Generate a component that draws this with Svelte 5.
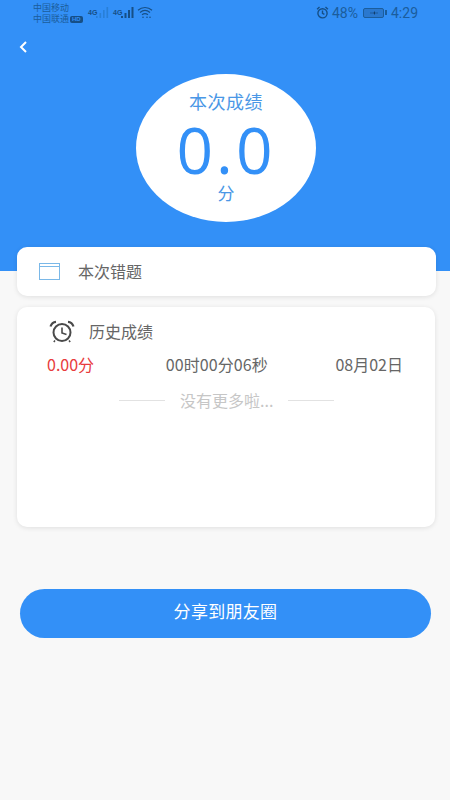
<script>
  const records = [{ score: '0.00分', time: '00时00分06秒', date: '08月02日' }];
</script>

<div class="page">
  <header class="hero">
    <div class="status">
      <div class="carriers">
        <span>中国移动</span>
        <span>中国联通<b class="hd">HD</b></span>
      </div>
      <div class="signal">
        <i class="net">4G</i>
        <svg width="15" height="12" viewBox="0 0 15 12"><g fill="#1f6fb8" opacity=".5"><rect x="1" y="10" width="1.600" height="2"/><rect x="4.500" y="7" width="1.600" height="5"/><rect x="8" y="4" width="1.600" height="8"/><rect x="11.500" y="1" width="1.600" height="11"/></g></svg>
        <i class="net second">4G</i>
        <svg width="15" height="12" viewBox="0 0 15 12"><g fill="#164f86"><rect x="1" y="10" width="2" height="2"/><rect x="4.500" y="7" width="2" height="5"/><rect x="8" y="4" width="2" height="8"/><rect x="11.500" y="1" width="2" height="11"/></g></svg>
        <svg class="wifi" width="16" height="13" viewBox="0 0 16 13" fill="none" stroke="#164f86" stroke-width="1.200"><path d="M1 4.200C5 .6 11 .6 15 4.200"/><path d="M3 6.500C6 4 10 4 13 6.500"/><path d="M5 8.800C6.800 7.400 9.200 7.400 11 8.800"/><circle cx="6" cy="11.300" r=".8" fill="#164f86" stroke="none"/><circle cx="10" cy="11.300" r=".8" fill="#164f86" stroke="none"/><circle cx="13" cy="11.300" r=".8" fill="#164f86" stroke="none"/></svg>
      </div>
      <div class="sys">
        <svg width="13" height="13" viewBox="0 0 24 24" fill="none" stroke="#164f86" stroke-width="2.600"><circle cx="12" cy="13.500" r="8.500"/><path d="M12 8.500v5l3.500 2M2 6l4.500-4M22 6l-4.500-4"/></svg>
        <span class="pct">48%</span>
        <span class="battery"><svg width="8" height="6" viewBox="0 0 8 6"><path d="M0 2.700h3.500L5 1v1.700h3v.6H5V5L3.500 3.300H0z" fill="#123f6d"/></svg></span>
        <span class="cap"></span>
        <span class="clock">4:29</span>
      </div>
    </div>
    <button class="back" aria-label="返回">
      <svg width="10" height="14" viewBox="0 0 10 14" fill="none" stroke="#fff" stroke-width="2"><path d="M8 2 3 7l5 5"/></svg>
    </button>
    <div class="score">
      <div class="label">本次成绩</div>
      <div class="value">0.0</div>
      <div class="unit">分</div>
    </div>
  </header>

  <main class="content">
    <section class="card wrong">
      <span class="window"></span>
      <span class="title">本次错题</span>
    </section>

    <section class="card history">
      <div class="history-head">
        <svg width="26" height="23" viewBox="0 0 26 23" fill="none" stroke="#4a4a4a" stroke-width="2"><circle cx="13" cy="12.500" r="8.500"/><path d="M13 7.500v5.500l4.500 1.500" stroke-width="1.600"/><path d="M1.500 6.500C2.500 3.500 4.500 2 7 1.800M24.500 6.500C23.500 3.500 21.500 2 19 1.800" stroke-width="2.200"/><path d="M6 20.500 4.800 22M20 20.500l1.200 1.500" stroke-width="1.500"/></svg>
        <span class="title">历史成绩</span>
      </div>
      {#each records as r}
        <div class="record">
          <span class="red">{r.score}</span>
          <span class="time">{r.time}</span>
          <span class="date">{r.date}</span>
        </div>
      {/each}
      <div class="end">
        <span class="line"></span>
        <span class="end-text">没有更多啦...</span>
        <span class="line"></span>
      </div>
    </section>

    <button class="share">分享到朋友圈</button>
  </main>
</div>

<style>
  :global(body) {
    margin: 0;
    background: #f8f8f8;
  }
  .page {
    width: 450px;
    height: 800px;
    overflow: hidden;
    background: #f8f8f8;
    font-family: "Noto Sans CJK SC", "Open Sans", sans-serif;
  }
  .hero {
    height: 271px;
    box-sizing: border-box;
    background: #3390f7;
    display: flex;
    flex-direction: column;
  }
  .status {
    height: 25px;
    display: flex;
    align-items: center;
    padding: 0 32px 0 33px;
    color: #1b5d9c;
  }
  .carriers {
    display: flex;
    flex-direction: column;
    font-size: 9px;
    line-height: 11px;
    width: 55px;
    white-space: nowrap;
  }
  .hd {
    display: inline-block;
    background: #164f86;
    color: #3390f7;
    font: 700 6px/7px "Liberation Sans", sans-serif;
    padding: 0 2px;
    border-radius: 2px;
    margin-left: 1px;
    vertical-align: 1px;
  }
  .signal {
    display: flex;
    align-items: center;
    margin-top: -1px;
  }
  .net {
    font: 700 7px/7px "Liberation Sans", sans-serif;
    color: #164f86;
    align-self: flex-start;
    margin-top: 3px;
    width: 7px;
    white-space: nowrap;
  }
  .net.second {
    margin-left: 3px;
  }
  .wifi {
    margin-left: 2px;
  }
  .sys {
    margin-left: auto;
    display: flex;
    align-items: center;
    font: 14px/16px "Roboto", sans-serif;
    color: #1b5d9c;
  }
  .pct {
    margin-left: 3px;
  }
  .battery {
    width: 19px;
    height: 8px;
    margin-left: 5px;
    border: 1px solid #1b5d9c;
    border-radius: 2px;
    background: #2a78cf;
    display: flex;
    align-items: center;
    justify-content: center;
  }
  .cap {
    width: 2px;
    height: 5px;
    margin-left: 1px;
    background: #1b5d9c;
  }
  .clock {
    margin-left: 4px;
  }
  .back {
    width: 20px;
    height: 20px;
    margin: 12px 0 0 13px;
    padding: 0;
    border: 0;
    background: none;
    display: flex;
    align-items: center;
    justify-content: center;
  }
  .score {
    width: 180px;
    height: 148px;
    margin: 17px 0 0 136px;
    border-radius: 50%;
    background: #fff;
    color: #3390f7;
    display: flex;
    flex-direction: column;
    align-items: center;
  }
  .label {
    margin-top: 15px;
    font-size: 18px;
    line-height: 24px;
    letter-spacing: .5px;
    color: #4a97e6;
  }
  .value {
    font-family: "Open Sans", sans-serif;
    font-size: 64px;
    line-height: 50px;
    margin-top: 12px;
    letter-spacing: 3px;
  }
  .unit {
    font-size: 17px;
    line-height: 22px;
    margin-top: 7px;
    color: #4a97e6;
  }
  .content {
    margin-top: -24px;
    padding: 0 14px 0 17px;
    display: flex;
    flex-direction: column;
  }
  .card {
    background: #fff;
    border-radius: 10px;
    box-shadow: 0 1px 5px rgba(0, 0, 0, .1);
  }
  .wrong {
    height: 49px;
    display: flex;
    align-items: center;
    padding-left: 22px;
  }
  .window {
    width: 21px;
    height: 17px;
    box-sizing: border-box;
    border: 1.500px solid #7ab8e8;
    background: linear-gradient(#7ab8e8, #7ab8e8) 0 2px / 100% 1px no-repeat;
  }
  .title {
    font-size: 16px;
    line-height: 20px;
    color: #666;
  }
  .wrong .title {
    margin-left: 18px;
    margin-top: -1px;
  }
  .history {
    height: 220px;
    width: 418px;
    margin-top: 11px;
    display: flex;
    flex-direction: column;
  }
  .history-head {
    display: flex;
    align-items: center;
    padding: 13px 0 0 32px;
    height: 23px;
  }
  .history-head .title {
    margin-left: 14px;
    margin-top: -2px;
  }
  .record {
    margin-top: 11px;
    display: flex;
    align-items: center;
    justify-content: space-between;
    padding: 0 32px 0 30px;
    font-size: 16px;
    line-height: 20px;
    color: #666;
  }
  .time {
    margin-left: 4px;
    letter-spacing: .1px;
  }
  .red {
    color: #e83c3c;
  }
  .end {
    margin-top: 16px;
    display: flex;
    align-items: center;
    padding-left: 102px;
  }
  .line {
    width: 46px;
    height: 1px;
    background: #e2e2e2;
  }
  .end-text {
    margin: 0 15px;
    font-size: 16px;
    line-height: 20px;
    color: #c6c6c6;
  }
  .share {
    width: 411px;
    height: 49px;
    margin: 62px 0 0 3px;
    padding: 0 0 5px;
    border: 0;
    border-radius: 25px;
    background: #3390f7;
    color: #fff;
    font: 17px/20px "Noto Sans CJK SC", sans-serif;
    letter-spacing: .3px;
  }
</style>
